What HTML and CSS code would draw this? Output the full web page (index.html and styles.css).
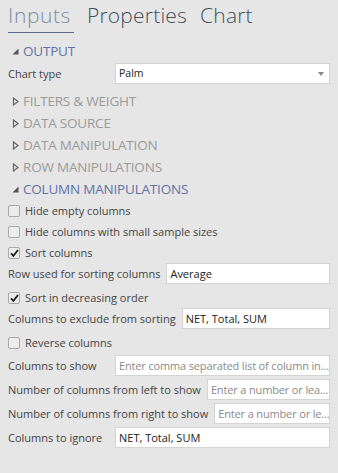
FILE: index.html
```html
<!DOCTYPE html>
<html>
<head>
<meta charset="utf-8">
<link rel="stylesheet" href="styles.css">
</head>
<body>
<div class="panel">
  <nav class="tabs">
    <span class="tab active">Inputs</span>
    <span class="tab">Properties</span>
    <span class="tab">Chart</span>
  </nav>

  <div class="section open">
    <svg class="tri" width="7" height="7" viewBox="0 0 7 7"><polygon points="0,6.5 6,0.5 6,6.5" fill="#555"/></svg>
    <span>OUTPUT</span>
  </div>
  <div class="field first">
    <label class="lbl">Chart type</label>
    <div class="select"><span>Palm</span><svg class="caret" width="6" height="4" viewBox="0 0 6 4"><polygon points="0,0 6,0 3,4" fill="#888"/></svg></div>
  </div>

  <div class="section closed">
    <svg class="tri" width="7" height="9" viewBox="0 0 7 9"><polygon points="1,1 5.5,4.5 1,8" fill="none" stroke="#666" stroke-width="1.2"/></svg>
    <span>FILTERS &amp; WEIGHT</span>
  </div>
  <div class="section closed">
    <svg class="tri" width="7" height="9" viewBox="0 0 7 9"><polygon points="1,1 5.5,4.5 1,8" fill="none" stroke="#666" stroke-width="1.2"/></svg>
    <span>DATA SOURCE</span>
  </div>
  <div class="section closed">
    <svg class="tri" width="7" height="9" viewBox="0 0 7 9"><polygon points="1,1 5.5,4.5 1,8" fill="none" stroke="#666" stroke-width="1.2"/></svg>
    <span>DATA MANIPULATION</span>
  </div>
  <div class="section closed">
    <svg class="tri" width="7" height="9" viewBox="0 0 7 9"><polygon points="1,1 5.5,4.5 1,8" fill="none" stroke="#666" stroke-width="1.2"/></svg>
    <span>ROW MANIPULATIONS</span>
  </div>
  <div class="section open">
    <svg class="tri" width="7" height="7" viewBox="0 0 7 7"><polygon points="0,6.5 6,0.5 6,6.5" fill="#555"/></svg>
    <span>COLUMN MANIPULATIONS</span>
  </div>

  <div class="check"><span class="box"></span><span>Hide empty columns</span></div>
  <div class="check"><span class="box"></span><span>Hide columns with small sample sizes</span></div>
  <div class="check"><span class="box"><svg width="9" height="8" viewBox="0 0 9 8"><path d="M1 4.3 L3.4 6.8 L8 1" fill="none" stroke="#222" stroke-width="1.9"/></svg></span><span>Sort columns</span></div>
  <div class="field">
    <label class="lbl tight">Row used for sorting columns</label>
    <div class="input">Average</div>
  </div>
  <div class="check"><span class="box"><svg width="9" height="8" viewBox="0 0 9 8"><path d="M1 4.3 L3.4 6.8 L8 1" fill="none" stroke="#222" stroke-width="1.9"/></svg></span><span>Sort in decreasing order</span></div>
  <div class="field">
    <label class="lbl tight">Columns to exclude from sorting</label>
    <div class="input">NET, Total, SUM</div>
  </div>
  <div class="check"><span class="box"></span><span>Reverse columns</span></div>
  <div class="field gap">
    <label class="lbl">Columns to show</label>
    <div class="input ph">Enter comma separated list of column in...</div>
  </div>
  <div class="field">
    <label class="lbl tight">Number of columns from left to show</label>
    <div class="input ph">Enter a number or lea...</div>
  </div>
  <div class="field">
    <label class="lbl tight">Number of columns from right to show</label>
    <div class="input ph">Enter a number or le...</div>
  </div>
  <div class="field">
    <label class="lbl">Columns to ignore</label>
    <div class="input">NET, Total, SUM</div>
  </div>
</div>
</body>
</html>
```

FILE: styles.css
```css
html, body {
  margin: 0;
  padding: 0;
  background: #e6e6e6;
}
body {
  font-family: "Open Sans", "DejaVu Sans", sans-serif;
  color: #444;
}
.panel {
  width: 338px;
  height: 473px;
  padding: 0 8px 0 8px;
  box-sizing: border-box;
  overflow: hidden;
}
.tabs {
  display: flex;
  gap: 13px;
  height: 40px;
  box-sizing: border-box;
}
.tab {
  font-size: 21px;
  font-weight: 300;
  line-height: 30px;
  color: #3f4f5c;
  height: 33px;
  box-sizing: border-box;
  letter-spacing: 0.2px;
}
.tab.active {
  color: #7f8ba6;
  border-bottom: 1px solid #5d6a88;
  padding-right: 3px;
  letter-spacing: 0.6px;
}
.section {
  display: flex;
  align-items: center;
  height: 22px;
  font-size: 13.5px;
  letter-spacing: -0.2px;
  color: #9a9a9a;
}
.section .tri {
  width: 14px;
  margin-left: 1px;
  flex: none;
}
.section.open {
  color: #6172a6;
}
.section span {
  line-height: 22px;
}
.field {
  display: flex;
  align-items: center;
  height: 21px;
  margin-bottom: 3px;
  font-size: 11px;
}
.field.first {
  margin-top: 1px;
  margin-bottom: 6px;
}
.field.gap {
  margin-top: 2px;
}
.lbl {
  width: 107px;
  flex: none;
  color: #444;
  white-space: nowrap;
}
.lbl.tight {
  width: auto;
  padding-right: 6px;
}
.input, .select {
  flex: 1;
  min-width: 0;
  height: 21px;
  box-sizing: border-box;
  background: #fff;
  border: 1px solid #d4d4d4;
  padding: 0 3px;
  line-height: 19px;
  color: #222;
  white-space: nowrap;
  overflow: hidden;
  font-size: 11px;
}
.input.ph {
  color: #8a8a8a;
  letter-spacing: -0.15px;
}
.select {
  display: flex;
  align-items: center;
  justify-content: space-between;
  font-size: 10.5px;
  padding-right: 5px;
}
.check {
  display: flex;
  align-items: center;
  height: 21px;
  font-size: 11px;
  color: #444;
}
.box {
  width: 10px;
  height: 10px;
  border: 1px solid #a9a9a9;
  border-radius: 2px;
  background: #ececec;
  margin-right: 5px;
  display: flex;
  align-items: center;
  justify-content: center;
  flex: none;
}
```
